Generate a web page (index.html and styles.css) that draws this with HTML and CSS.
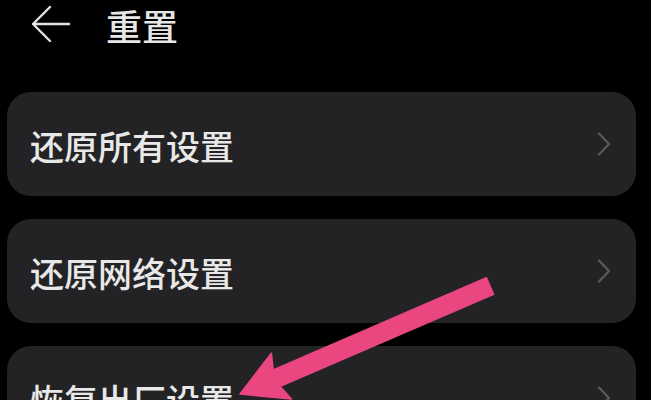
FILE: index.html
```html
<!DOCTYPE html>
<html lang="zh-CN">
<head>
<meta charset="utf-8">
<title>重置</title>
<link rel="stylesheet" href="styles.css">
</head>
<body>
<div class="page">
  <header class="header">
    <svg class="back" width="40" height="36" viewBox="0 0 40 36" aria-hidden="true">
      <path d="M18 1 L1 18 L18 35 M1 18 H37" fill="none" stroke="#e2e2e2" stroke-width="2.4" stroke-linecap="round" stroke-linejoin="round"/>
    </svg>
    <h1 class="title">重置</h1>
  </header>
  <main class="list">
    <div class="card">
      <span class="label">还原所有设置</span>
      <svg class="chev" width="14" height="24" viewBox="0 0 14 24" aria-hidden="true"><path d="M2 1.5 L12 12 L2 22.5" fill="none" stroke="#5b5b5d" stroke-width="2.2" stroke-linecap="round" stroke-linejoin="round"/></svg>
    </div>
    <div class="card">
      <span class="label">还原网络设置</span>
      <svg class="chev" width="14" height="24" viewBox="0 0 14 24" aria-hidden="true"><path d="M2 1.5 L12 12 L2 22.5" fill="none" stroke="#5b5b5d" stroke-width="2.2" stroke-linecap="round" stroke-linejoin="round"/></svg>
    </div>
    <div class="card">
      <span class="label">恢复出厂设置</span>
      <svg class="chev" width="14" height="24" viewBox="0 0 14 24" aria-hidden="true"><path d="M2 1.5 L12 12 L2 22.5" fill="none" stroke="#5b5b5d" stroke-width="2.2" stroke-linecap="round" stroke-linejoin="round"/></svg>
    </div>
  </main>
  <svg class="pointer" width="651" height="400" viewBox="0 0 651 400" aria-hidden="true">
    <polygon points="240,394 271.4,353.2 273.2,369.9 486.4,277.7 493.6,294.3 280.3,386.4 291.3,399.1" fill="#ea4680" stroke="#ea4680" stroke-width="1.5" stroke-linejoin="round"/>
  </svg>
</div>
</body>
</html>
```
FILE: styles.css
```css
html, body {
  margin: 0;
  padding: 0;
  background: #000;
  overflow: hidden;
}
.page {
  position: relative;
  width: 651px;
  height: 400px;
  overflow: hidden;
  font-family: "Noto Sans CJK SC", "Noto Sans", sans-serif;
  color: #e6e6e6;
}
.header {
  height: 50px;
  display: flex;
  align-items: center;
  padding-left: 32px;
}
.back {
  display: block;
  flex: none;
  margin-top: -2px;
}
.title {
  margin: 0 0 0 34px;
  font-size: 36px;
  font-weight: 500;
  line-height: 1;
  color: #e6e6e6;
}
.list {
  display: flex;
  flex-direction: column;
  gap: 23px;
  padding: 42px 0 0 7px;
}
.card {
  width: 629px;
  height: 104px;
  box-sizing: border-box;
  border-radius: 24px;
  background: #232325;
  display: flex;
  align-items: center;
  justify-content: space-between;
  padding: 0 25px 0 23px;
  flex: none;
}
.label {
  font-size: 34px;
  font-weight: 500;
  line-height: 1;
  color: #e8e8e8;
  margin-top: 3px;
}
.chev {
  display: block;
}
.pointer {
  position: absolute;
  left: 0;
  top: 0;
}
```
